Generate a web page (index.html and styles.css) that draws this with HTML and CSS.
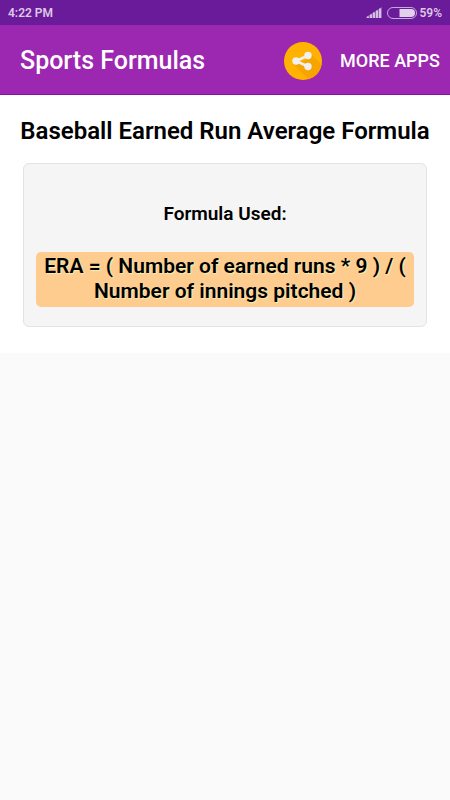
FILE: index.html
```
<!DOCTYPE html>
<html lang="en">
  <head>
    <meta charset="UTF-8" />
    <meta name="viewport" content="width=device-width, initial-scale=1.0" />
    <title>Sports Formulas</title>
    <link rel="stylesheet" href="styles.css">
  </head>
  <body>
    <div class="status-bar">
      <span class="time">4:22 PM</span>
      <svg class="signal" width="16" height="11" viewBox="0 0 16 11" aria-hidden="true">
        <path d="M0 11V10L16 0V11Z" fill="#9463b8" />
        <path d="M1 9.5h2V11H1zM4 7.5h2V11H4zM7 5.5h2V11H7zM10 3.5h2V11h-2zM13 1.5h2V11h-2z" fill="#d5bfe2" />
      </svg>
      <svg class="battery" width="31" height="12" viewBox="0 0 31 12" aria-hidden="true">
        <rect x="0.5" y="0.5" width="29" height="11" rx="5.5" fill="none" stroke="#c5a9d8" />
        <path d="M12.5 2H24a4 4 0 0 1 0 8H12.5Z" fill="#e1d0eb" />
      </svg>
      <span class="percent">59%</span>
    </div>

    <header class="app-bar">
      <h1>Sports Formulas</h1>
      <button type="button" class="share" aria-label="Share">
        <svg width="38" height="38" viewBox="0 0 38 38" aria-hidden="true">
          <circle cx="19" cy="19" r="19" fill="#ffb300" />
          <path d="M9 22L24.5 37.2A19 19 0 0 0 37.6 22.5L27 12L20 19Z" fill="#f7a400" />
          <path d="M24 13.5L12 19L24 24.5" fill="none" stroke="#f1f1f1" stroke-width="2.5" />
          <circle cx="12" cy="19" r="3.7" fill="#f1f1f1" />
          <circle cx="24" cy="13.5" r="3.7" fill="#f1f1f1" />
          <circle cx="24" cy="24.5" r="3.7" fill="#f1f1f1" />
        </svg>
      </button>
      <button type="button" class="more">MORE APPS</button>
    </header>

    <main class="content">
      <h2>Baseball Earned Run Average Formula</h2>
      <div class="card">
        <h3>Formula Used:</h3>
        <p class="formula">ERA = ( Number of earned runs * 9 ) / ( Number of innings pitched )</p>
      </div>
    </main>
  </body>
</html>
```
FILE: styles.css
```
* {
  box-sizing: border-box;
}

body {
  font-family: Roboto, "Liberation Sans", sans-serif;
  background-color: #fafafa;
  color: #000000;
  margin: 0;
}

.status-bar {
  display: flex;
  align-items: center;
  height: 25px;
  padding: 0 8px;
  background-color: #6a1b9a;
  color: #dcc9e7;
  font-size: 12px;
  font-weight: 600;
}

.time {
  margin-right: auto;
}

.battery {
  margin: 0 1px 0 5px;
}

.app-bar {
  display: flex;
  align-items: center;
  height: 70px;
  padding: 2px 10px 0 20px;
  background-color: #9c27b0;
  border-bottom: 1px solid #8e0fa3;
  color: #ffffff;
}

h1 {
  margin: 0 auto 0 0;
  font-size: 25px;
  font-weight: 500;
}

.app-bar button {
  padding: 0;
  border: none;
  background: none;
  color: inherit;
  font-family: inherit;
  cursor: pointer;
}

.share {
  display: flex;
  margin-right: 18px;
}

.app-bar .more {
  font-size: 18px;
  font-weight: 500;
}

.content {
  padding: 20px 23px 26px;
  background-color: #ffffff;
  text-align: center;
}

h2 {
  margin: 0 -10px 16px;
  font-size: 24px;
  line-height: 32px;
  font-weight: 600;
}

.card {
  padding: 38px 12px 19px;
  background-color: #f5f5f5;
  border: 1px solid #e3e3e3;
  border-radius: 6px;
}

h3 {
  margin: 0 0 26px;
  font-size: 19px;
  line-height: 24px;
  font-weight: 600;
}

.formula {
  margin: 0;
  padding: 2px 4px 3px;
  background-color: #ffcc90;
  border-radius: 5px;
  font-size: 21px;
  line-height: 25px;
  font-weight: 600;
  text-shadow: 1px 1px 1px #f3f0b0;
}
```
